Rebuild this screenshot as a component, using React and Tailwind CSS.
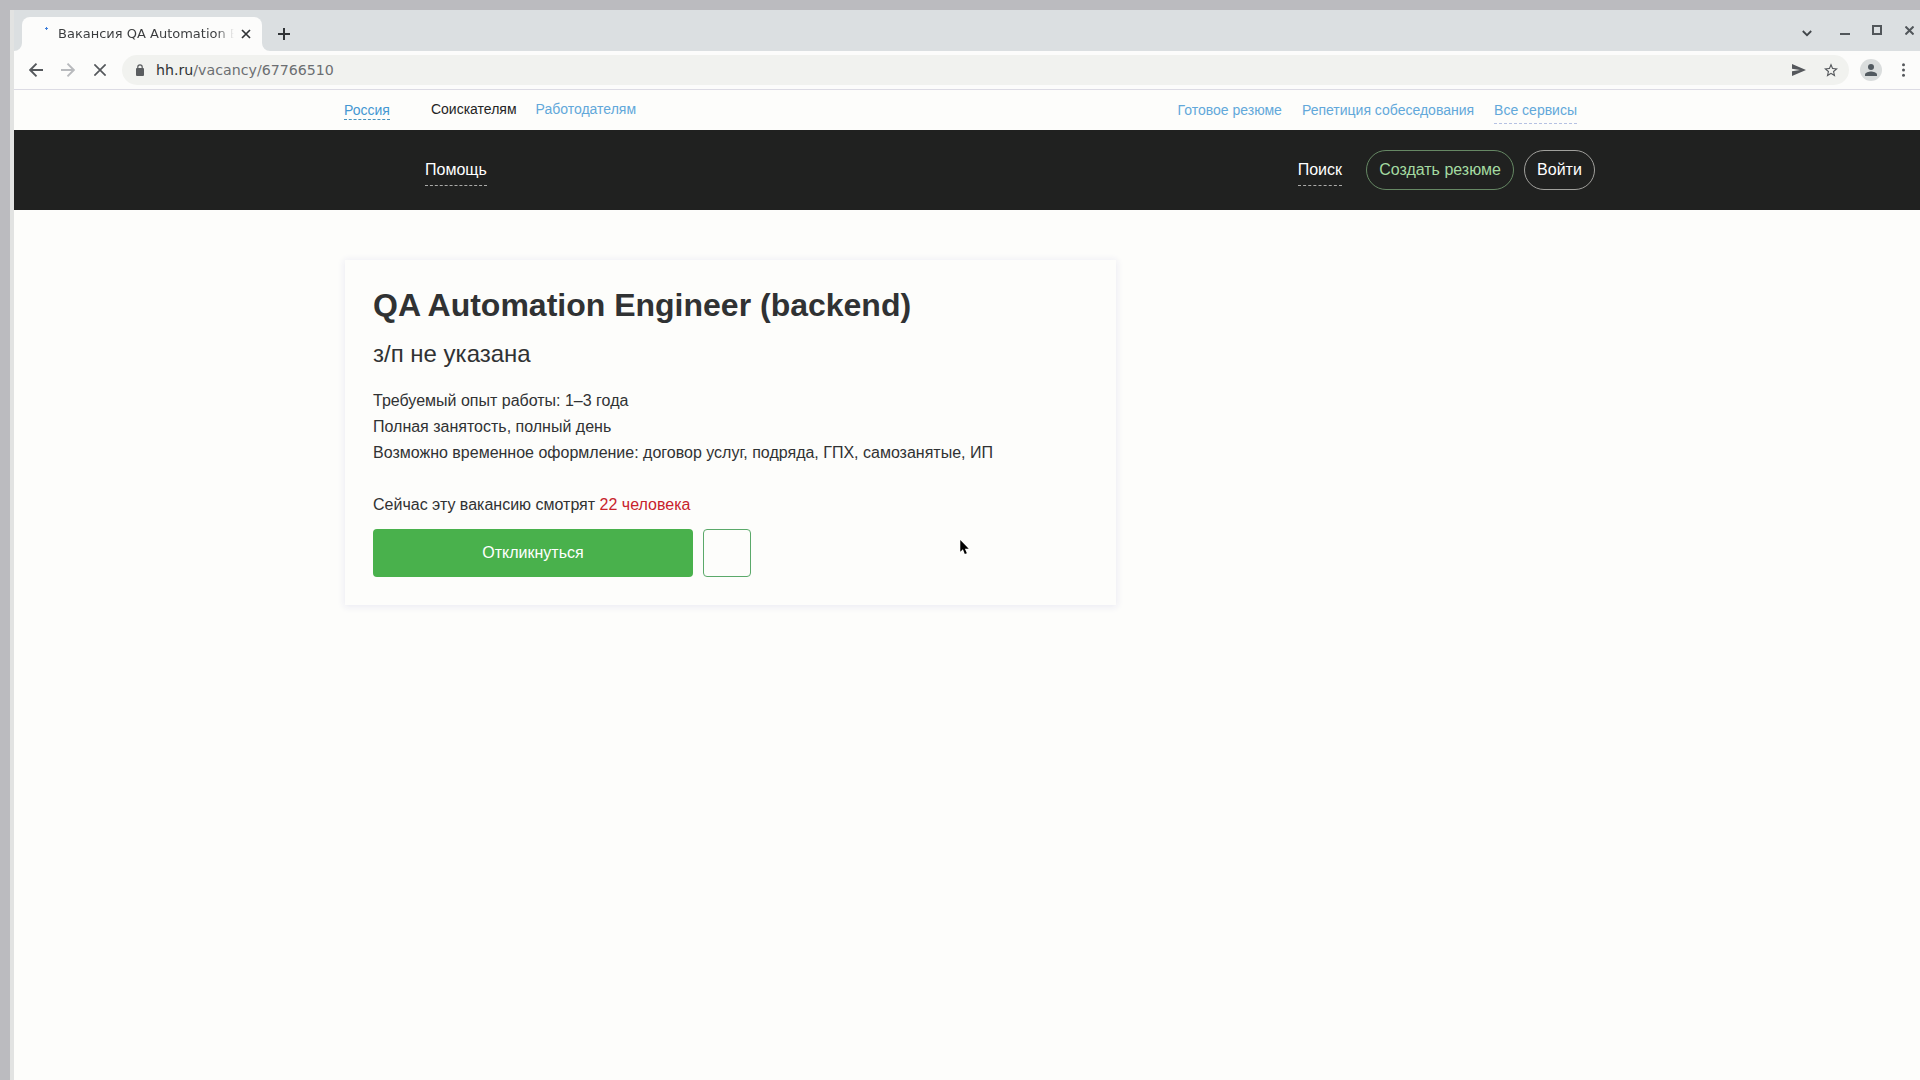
function TabStrip() {
  return (
    <div className="flex h-[41px] shrink-0 bg-[#dbdfe1]">
      <div className="flex w-[264px] pl-[8px] pt-[7px]">
        <div className="relative flex h-[34px] w-[240px] items-center rounded-t-lg bg-[#fcfcfb]">
          <svg className="absolute -left-2 bottom-0 h-2 w-2" viewBox="0 0 8 8" fill="#fcfcfb"><path d="M8 0v8H0a8 8 0 0 0 8-8z" /></svg>
          <svg className="absolute -right-2 bottom-0 h-2 w-2" viewBox="0 0 8 8" fill="#fcfcfb"><path d="M0 0v8h8a8 8 0 0 1-8-8z" /></svg>
          <svg className="-mt-[11px] ml-[23px] h-[3px] w-[3px]" viewBox="0 0 3 3" fill="#3f7fdc"><path d="M1 0h1v1h1v1H2v1H1V2H0V1h1z" /></svg>
          <div className="ml-[10px] w-[176px] whitespace-nowrap bg-gradient-to-r from-[#3a3c3e] from-90% to-[#3a3c3e00] bg-clip-text font-['DejaVu_Sans'] text-[13px] leading-5 text-transparent">Вакансия QA Automation E</div>
          <svg className="ml-[8px] h-2 w-2 overflow-visible" viewBox="0 0 8 8" stroke="#303336" strokeWidth="1.7"><path d="M0 0l8 8M8 0L0 8" /></svg>
        </div>
      </div>
      <svg className="mt-[18px] h-3 w-3" viewBox="0 0 12 12" stroke="#303336" strokeWidth="2"><path d="M6 0v12M0 6h12" /></svg>
      <div className="ml-auto flex w-[118px] items-start pt-[15px]">
        <svg className="mt-[5px] h-[7px] w-[10px]" viewBox="0 0 10 7" fill="none" stroke="#41464a" strokeWidth="1.8"><path d="M.8 1L5 5.2 9.200 1" /></svg>
        <div className="ml-[28px] mt-[8px] h-[2px] w-[10px] bg-[#51565a]" />
        <div className="ml-[22px] h-[10px] w-[10px] border-2 border-[#51565a]" />
        <svg className="ml-[23px] mt-[1px] h-[9px] w-[9px]" viewBox="0 0 9 9" stroke="#51565a" strokeWidth="2"><path d="M.5 .5l8 8M8.500 .5l-8 8" /></svg>
      </div>
    </div>
  );
}

function Toolbar() {
  return (
    <div className="flex h-[39px] shrink-0 items-center border-b border-[#dcdbe4] bg-[#fcfcfb]">
      <svg className="ml-[15px] h-[14px] w-[14px]" viewBox="0 0 14 14" fill="none" stroke="#55585c" strokeWidth="1.9"><path d="M14 7H1M7.500.7L1.200 7l6.300 6.300" /></svg>
      <svg className="ml-[18px] h-[14px] w-[14px]" viewBox="0 0 14 14" fill="none" stroke="#b8babd" strokeWidth="1.9"><path d="M0 7h13M6.500.7L12.800 7l-6.300 6.300" /></svg>
      <svg className="ml-[19px] h-3 w-3" viewBox="0 0 12 12" stroke="#55585c" strokeWidth="1.7"><path d="M.4.4l11.200 11.200M11.600.4L.4 11.600" /></svg>
      <div className="ml-[16px] flex h-[30px] flex-1 items-center rounded-full bg-[#f1f2ef]">
        <svg className="ml-[14px] h-[12px] w-[8px]" viewBox="0 0 8 12"><rect y="4" width="8" height="8" rx="1" fill="#5a5d60" /><path d="M1.800 4.500V3a2.200 2.200 0 0 1 4.400 0v1.500" fill="none" stroke="#5a5d60" strokeWidth="1.2" /></svg>
        <div className="ml-[12px] font-['DejaVu_Sans'] text-[14.200px] leading-5 text-[#6c6f72]"><span className="text-[#2f3234]">hh.ru</span>/vacancy/67766510</div>
        <svg className="ml-auto h-[12px] w-[14px]" viewBox="0 0 14 12" fill="#55585c"><path d="M0 0l14 6-14 6V7.300L8 6 0 4.700z" /></svg>
        <svg className="ml-[18px] mr-[11px] h-[14px] w-[14px]" viewBox="2 2 20 19" fill="#55585c"><path d="M22 9.240l-7.190-.62L12 2 9.190 8.630 2 9.240l5.460 4.730L5.820 21 12 17.270 18.180 21l-1.630-7.030L22 9.240zM12 15.400l-3.760 2.270 1-4.280-3.320-2.880 4.380-.38L12 6.100l1.710 4.040 4.380.38-3.320 2.880 1 4.280L12 15.400z" /></svg>
      </div>
      <div className="ml-[11px] flex h-[22px] w-[22px] items-center justify-center rounded-full bg-[#dadddd]">
        <svg className="h-3 w-3" viewBox="0 0 12 12" fill="#525a60"><circle cx="6" cy="3" r="3" /><path d="M0 12v-1.500C0 8.500 4 7.500 6 7.500s6 1 6 3V12z" /></svg>
      </div>
      <svg className="ml-[20px] mr-[15px] h-[14px] w-[3px]" viewBox="0 0 3 14" fill="#55585c"><circle cx="1.500" cy="1.800" r="1.500" /><circle cx="1.500" cy="7" r="1.500" /><circle cx="1.500" cy="12.200" r="1.500" /></svg>
    </div>
  );
}

function TopLinks() {
  return (
    <div className="flex h-[40px] shrink-0 items-start pl-[330px] pr-[343px] text-[14px] leading-[18px] text-[#62a8da]">
      <div className="mt-[11px] border-b border-dashed border-[#4792bd] text-[#4497d2]">Россия</div>
      <div className="ml-[41px] mt-[10px] text-[#242424]">Соискателям</div>
      <div className="ml-[19px] mt-[10px]">Работодателям</div>
      <div className="ml-auto mt-[11px]">Готовое резюме</div>
      <div className="ml-[20px] mt-[11px]">Репетиция собеседования</div>
      <div className="ml-[20px] mt-[11px] border-b border-dashed border-[#b5c1e2] pb-[4px]">Все сервисы</div>
    </div>
  );
}

function NavBar() {
  return (
    <div className="flex h-[80px] shrink-0 items-start bg-[#202120] pl-[411px] pr-[325px] text-[16px] leading-[20px] text-white">
      <div className="mt-[30px] border-b border-dashed border-[#aaaaa8] pb-[5px]">Помощь</div>
      <div className="ml-auto mt-[30px] border-b border-dashed border-[#aaaaa8] pb-[5px]">Поиск</div>
      <div className="ml-[24px] mt-[20px] flex h-[40px] w-[148px] items-center justify-center rounded-full border border-[#668864] text-[#a4dba1]">Создать резюме</div>
      <div className="ml-[10px] mt-[20px] flex h-[40px] w-[71px] items-center justify-center rounded-full border border-[#a0a09c]">Войти</div>
    </div>
  );
}

function VacancyCard() {
  return (
    <div className="ml-[331px] mt-[50px] h-[345px] w-[771px] px-[28px] pt-[24px] text-[16px] leading-[26px] text-[#303233] shadow-[0_1px_7px_1px_#ebebf3]">
      <h1 className="whitespace-nowrap text-[32px] font-bold leading-[42px]">QA Automation Engineer (backend)</h1>
      <div className="mt-[12px] text-[24px] leading-[32px]">з/п не указана</div>
      <div className="mt-[18px]">Требуемый опыт работы: 1–3 года</div>
      <div>Полная занятость, полный день</div>
      <div className="whitespace-nowrap">Возможно временное оформление: договор услуг, подряда, ГПХ, самозанятые, ИП</div>
      <div className="mt-[26px]">Сейчас эту вакансию смотрят <span className="text-[#c8232c]">22 человека</span></div>
      <div className="mt-[11px] flex gap-[10px]">
        <div className="flex h-[48px] w-[320px] items-center justify-center rounded bg-[#49b14c] text-white">Откликнуться</div>
        <div className="h-[48px] w-[48px] rounded border border-[#5ba96a]" />
      </div>
    </div>
  );
}

export default function App() {
  return (
    <div className="relative flex h-[1080px] w-[1920px] overflow-hidden bg-[#bbbbbf] pl-[10px] pt-[10px] font-['Liberation_Sans',sans-serif]">
      <div className="flex flex-1 bg-[#e2e3e2] pl-[4px]">
        <div className="flex w-[1906px] flex-col bg-[#fdfdfb]">
          <TabStrip />
          <Toolbar />
          <TopLinks />
          <NavBar />
          <VacancyCard />
        </div>
      </div>
      <svg className="absolute left-[960px] top-[540px] h-[15px] w-[9px]" viewBox="0 0 9 16"><path d="M0 0v12.500l2.800-2.600 2 5.100 2.200-.9-2.100-4.800H9z" fill="#000" /></svg>
    </div>
  );
}
